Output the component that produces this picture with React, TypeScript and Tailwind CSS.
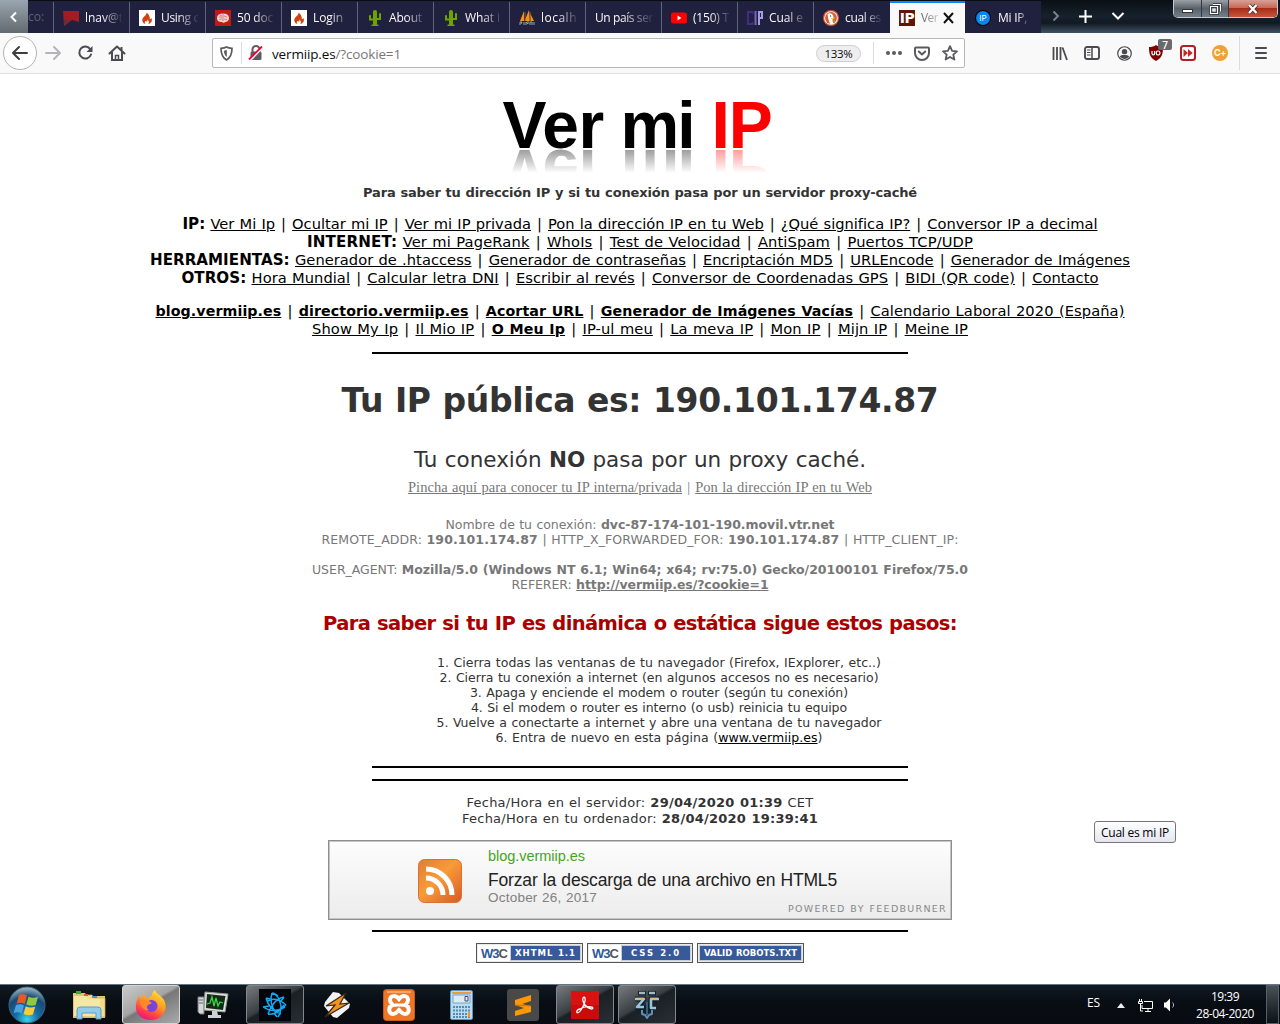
import { useLayoutEffect, useRef, useState } from "react";
import type { ReactNode } from "react";

/** One line of text whose tracking is adjusted so that it spans `w` pixels. */
function Fit({ w, className = "", children }: { w: number; className?: string; children: ReactNode }) {
  const ref = useRef<HTMLSpanElement>(null);
  const [spacing, setSpacing] = useState(0);
  useLayoutEffect(() => {
    const el = ref.current;
    if (!el) return;
    const natural = el.getBoundingClientRect().width;
    setSpacing((w - natural) / Math.max(1, (el.textContent ?? "").length));
  }, [w]);
  return (
    <span ref={ref} className={`inline-block whitespace-nowrap ${className}`} style={{ letterSpacing: `${spacing}px` }}>
      {children}
    </span>
  );
}

function Line({ w, className = "", children }: { w: number; className?: string; children: ReactNode }) {
  return (
    <div className="flex justify-center">
      <Fit w={w} className={className}>{children}</Fit>
    </div>
  );
}

const Bar = () => <span className="mx-[0.058em]">|</span>;
const Head = ({ children }: { children: ReactNode }) => <b className="text-[1.030em]">{children}</b>;

function Links({ items }: { items: string[] }) {
  return (
    <>
      {items.map((t, i) => (
        <span key={t}>
          {i > 0 && <> <Bar /> </>}
          {t.startsWith("*") ? <b className="text-[0.970em] underline">{t.slice(1)}</b> : <span className="underline">{t}</span>}
        </span>
      ))}
    </>
  );
}

/* ---------- tab icons ---------- */
const Flag = () => (
  <svg width="16" height="16" viewBox="0 0 16 16"><path d="M0 1h16v11L9 10 1 16z" fill="#a31c20" /><path d="M1 16V9l7 2z" fill="#6e2d35" /></svg>
);
const Flame = () => (
  <svg width="16" height="16" viewBox="0 0 16 16">
    <rect width="16" height="16" fill="#fff" />
    <path d="M7.500 2.500c.5 2-2 3.500-3.400 5.200-1.800 2.500-.3 5.600 2.300 6.400-1-1.200-.9-2.300.6-3.400.1.900.8 1.200 1.300.6.400-.6-.1-1.200 0-1.800 1.700 1.100 2.300 3.200.9 4.600 3-.7 4.600-3.300 3.200-6-.4 1-1 1.300-1.600 1.100C11.300 6.500 9.500 4 7.500 2.500z" fill="#d2400f" />
  </svg>
);
const Brain = () => (
  <svg width="16" height="16" viewBox="0 0 16 16">
    <rect width="16" height="16" fill="#c01a14" />
    <path d="M2 8c0-3 2-4.500 6-4.500S14 5 14 8s-2.500 4-4 4l-1 1-2-1C4 12 2 11 2 8z" fill="#f6d6cf" />
    <path d="M8 3.500V11M4 7h3M4.500 9.500 7 9M9 6l3 1M9 9l3 .5M5 5l2 1" stroke="#c55" strokeWidth=".7" fill="none" />
  </svg>
);
const Cactus = () => (
  <svg width="16" height="16" viewBox="0 0 16 16" fill="none" stroke="#6fa400" strokeLinecap="round">
    <path d="M8 2v12" strokeWidth="4" /><path d="M3 6v3.500h4M13 4v5H9" strokeWidth="2" /><path d="M5 15.300h6" strokeWidth="1.400" />
  </svg>
);
const Sails = () => (
  <svg width="16" height="16" viewBox="0 0 16 16">
    <path d="M5 1 1 11h4zM10 0 5.500 11H11zM11 3l4 8h-3.500z" fill="#f29222" />
    <path d="M6 2v9M11 2v9" stroke="#8c5a2b" />
    <path d="M1 15v-3h2l-1 2M5 15v-3M7 15v-3l2 2v-3M11 15v-3h2v3M15 15v-3" stroke="#a0a0b0" fill="none" />
  </svg>
);
const YouTube = () => (
  <svg width="16" height="16" viewBox="0 0 16 16"><rect y="2.500" width="16" height="11" rx="2.500" fill="#f00" /><path d="M6.500 5.500v5l4-2.500z" fill="#fff" /></svg>
);
const Cip = () => (
  <svg width="16" height="16" viewBox="0 0 16 16" fill="none">
    <path d="M5.500 4V2H1v12h4.500v-2" stroke="#40308c" strokeWidth="1.800" /><path d="M8.500 1v14" stroke="#7566bd" strokeWidth="2" />
    <path d="M12 15V2h3v6h-3" stroke="#a79cdf" strokeWidth="2" />
  </svg>
);
const Duck = () => (
  <svg width="16" height="16" viewBox="0 0 16 16">
    <circle cx="8" cy="8" r="8" fill="#de5833" /><circle cx="8" cy="8" r="6.800" fill="#fff" /><circle cx="8" cy="8" r="5.900" fill="#de5833" />
    <path d="M4.500 4c2-1.500 6-.5 6 3l-1 3 1 4H7L5 8z" fill="#fff" /><path d="M8 8.200 12 7.500l-1 1.500H8z" fill="#fdd20a" /><path d="m9 11 3-1v3z" fill="#65bc46" /><circle cx="7.500" cy="6" r=".7" fill="#2d4f8e" />
  </svg>
);
const IpSquare = () => (
  <span className="flex h-4 w-4 shrink-0 items-center justify-center bg-[#611605] font-['DejaVu_Sans'] text-[14px] leading-none font-bold tracking-[-0.500px] text-white">IP</span>
);
const IpCircle = () => (
  <span className="flex size-[14px] items-center justify-center rounded-full bg-[#0a84f0] font-['Inter'] text-[8px] leading-none text-white ring-1 ring-black">IP</span>
);

const tabs: { icon?: ReactNode; label: string; w: number }[] = [
  { icon: <Flag />, label: "lnav@t", w: 38 },
  { icon: <Flame />, label: "Using c", w: 38 },
  { icon: <Brain />, label: "50 doc", w: 36 },
  { icon: <Flame />, label: "Login", w: 30 },
  { icon: <Cactus />, label: "About", w: 33 },
  { icon: <Cactus />, label: "What i", w: 35 },
  { icon: <Sails />, label: "localh", w: 36 },
  { label: "Un país ser", w: 58 },
  { icon: <YouTube />, label: "(150) T", w: 36 },
  { icon: <Cip />, label: "Cual e", w: 34 },
  { icon: <Duck />, label: "cual es", w: 36 },
];

function TabBar() {
  return (
    <div className="flex h-[33px] bg-gradient-to-r from-[#7b828b] via-[#0a1016] to-[#56616d]">
      <div className="flex w-7 items-center justify-center bg-gradient-to-b from-[#99a5b0] to-[#646b70]">
        <svg width="10" height="12" viewBox="0 0 10 12"><path d="M7 1.500 2.500 6 7 10.500" stroke="#fff" strokeWidth="2" fill="none" /></svg>
      </div>
      <div className="flex border-t border-[#0a0c12] font-['Open_Sans',sans-serif] text-[12px] text-[#f9f9fa]">
        <div className="flex w-[25px] items-center overflow-hidden bg-[#20213f] text-[#5e5f75]">co:</div>
        {tabs.map((t, i) => (
          <div key={i} className="flex w-[76px] items-center bg-[#20213f] pt-px">
            <div className="h-full w-px bg-[#62637a]" />
            <div className="flex w-[69px] items-center gap-[6px] pl-[9px]">
              {t.icon && <span className="shrink-0">{t.icon}</span>}
              <div className="min-w-0 flex-1 [mask-image:linear-gradient(to_right,#000_45%,transparent_100%)]">
                <Fit w={t.w}>{t.label}</Fit>
              </div>
            </div>
          </div>
        ))}
        <div className="w-px bg-[#20213f]" />
        <div className="flex w-[75px] items-center border-t-2 border-[#0a84ff] bg-[#f9f9fa] pl-[9px] text-[#0c0c0d]">
          <IpSquare />
          <span className="ml-[6px] w-[17px] whitespace-nowrap [mask-image:linear-gradient(to_right,#000a,#0003)]"><Fit w={17}>Ver</Fit></span>
          <svg className="ml-[4px]" width="14" height="12" viewBox="0 0 14 12"><path d="m2 1 9 10M11 1 2 11" stroke="#111" strokeWidth="2" /></svg>
        </div>
        <div className="flex w-[76px] items-center gap-2 bg-[#20213f] pt-px pl-[11px]">
          <IpCircle />
          <div className="w-8 [mask-image:linear-gradient(to_right,#000_60%,transparent_100%)]"><Fit w={29}>Mi IP,</Fit></div>
        </div>
      </div>
      <div className="flex flex-1 bg-[linear-gradient(to_bottom,#0a0f15_0%,#17212c_50%,#111a22_70%,#405264_100%)]">
        <div className="flex h-8 items-center">
          <svg className="ml-[10px]" width="10" height="12" viewBox="0 0 10 12"><path d="m2.500 1.500 4.500 4.500-4.500 4.500" stroke="#7f858c" strokeWidth="1.800" fill="none" /></svg>
          <svg className="ml-[17px]" width="15" height="15" viewBox="0 0 15 15"><path d="M7.500 1v13M1 7.500h13" stroke="#fff" strokeWidth="2" /></svg>
          <svg className="ml-[18px]" width="14" height="12" viewBox="0 0 14 12"><path d="m1.500 3 5.500 5.500L12.500 3" stroke="#fff" strokeWidth="2" fill="none" /></svg>
        </div>
        <div className="mr-[2px] ml-auto flex h-[18px] overflow-hidden rounded-b-[5px] border border-t-0 border-[#c4c9ce]">
          <div className="flex w-[28px] items-end justify-center border-r border-[#32383f] bg-gradient-to-b from-[#9aa0a6] via-[#59626b] to-[#747f89] pb-1"><div className="h-[4px] w-[11px] border border-[#333] bg-white" /></div>
          <div className="flex w-[27px] items-center justify-center border-r border-[#32383f] bg-gradient-to-b from-[#9aa0a6] via-[#59626b] to-[#747f89]">
            <svg width="13" height="12" viewBox="0 0 13 12" fill="none"><path d="M4 1.500h7.500v7M1.500 3.500h7v7h-7z" stroke="#2c3138" strokeWidth="2.600" /><path d="M4 1.500h7.500v7M1.500 3.500h7v7h-7zM4 6h2v2H4z" stroke="#fff" strokeWidth="1.200" /></svg>
          </div>
          <div className="flex w-[48px] items-center justify-center bg-[linear-gradient(to_bottom,#d9a096_0%,#c56a58_45%,#a82d17_50%,#c9553a_100%)]">
            <svg width="14" height="12" viewBox="0 0 14 12"><path d="m3 2 7.500 8M10.500 2 3 10" stroke="#4a2a28" strokeWidth="4" /><path d="m3 2 7.500 8M10.500 2 3 10" stroke="#fff" strokeWidth="2.400" /></svg>
          </div>
        </div>
      </div>
    </div>
  );
}

function Toolbar() {
  return (
    <div className="flex h-[41px] items-center border-b border-[#e0e0e1] bg-[#f9f9fa] text-[#4a4a4f]">
      <div className="ml-[3px] flex size-[34px] items-center justify-center rounded-full border border-[#b4b4b6] bg-white">
        <svg width="18" height="16" viewBox="0 0 18 16" fill="none" stroke="#3e3e42" strokeWidth="2" strokeLinecap="round" strokeLinejoin="round"><path d="M16 8H2M8 2 2 8l6 6" /></svg>
      </div>
      <svg className="ml-2" width="17" height="16" viewBox="0 0 17 16" fill="none" stroke="#b5b5b7" strokeWidth="2" strokeLinecap="round" strokeLinejoin="round"><path d="M1 8h14M9 2l6 6-6 6" /></svg>
      <svg className="ml-[15px]" width="17" height="16" viewBox="0 0 17 16" fill="none"><path d="M13.300 4.200A6 6 0 1 0 14 9.500" stroke="#4a4a4f" strokeWidth="2" strokeLinecap="round" /><path d="M15.500 1v6h-6z" fill="#4a4a4f" /></svg>
      <svg className="ml-[14px]" width="18" height="16" viewBox="0 0 18 16" fill="none" stroke="#4a4a4f" strokeWidth="2"><path d="m1.500 8.500 7.500-7 7.500 7" strokeLinecap="round" strokeLinejoin="round" /><path d="M4 7v8h10V7" /><path d="M7.500 15v-4.500h3V15" strokeWidth="1.500" /><path d="M13.500 2v3" /></svg>

      <div className="ml-[86px] flex h-[30px] w-[753px] items-center rounded-[2px] border border-[#b8b8ba] bg-white">
        <svg className="ml-[7px]" width="13" height="15" viewBox="0 0 13 15"><path d="M6.500 1C8 2 10 2.300 12 2.300 12 8 11 11.500 6.500 14 2 11.500 1 8 1 2.300 3 2.300 5 2 6.500 1z" fill="none" stroke="#5c5c60" strokeWidth="1.700" /><path d="M6.800 4v7C4.800 9.500 4 7.500 4 4.800z" fill="#5c5c60" /></svg>
        <div className="ml-2 h-[22px] w-px bg-[#dcdcde]" />
        <svg className="ml-[6px]" width="16" height="16" viewBox="0 0 16 16"><path d="M4.500 7V4.500a3.500 3.500 0 0 1 7 0V7" fill="none" stroke="#5c5c60" strokeWidth="2" /><rect x="2.500" y="6.500" width="11" height="8.500" rx="1.500" fill="#5c5c60" /><path d="M2.500 15 14 3" stroke="#fff" strokeWidth="2" /><path d="M1 14.500 14 1.500" stroke="#ff0039" strokeWidth="1.800" /></svg>
        <Fit w={129} className="mt-[2px] ml-2 font-['Open_Sans',sans-serif] text-[13.500px] leading-5 text-[#0c0c0d]">vermiip.es<span className="text-[#77777a]">/?cookie=1</span></Fit>
        <div className="ml-auto flex h-[17px] w-[45px] items-center justify-center rounded-full border border-[#cfcfd1] bg-[#eeeeef] font-['Open_Sans',sans-serif] text-[11.500px] text-[#0c0c0d]"><Fit w={28} className="mt-px">133%</Fit></div>
        <div className="ml-3 h-[22px] w-px bg-[#dcdcde]" />
        <svg className="ml-3" width="16" height="4" viewBox="0 0 16 4" fill="#5a5a5e"><circle cx="2" cy="2" r="2" /><circle cx="8" cy="2" r="2" /><circle cx="14" cy="2" r="2" /></svg>
        <svg className="ml-3" width="16" height="15" viewBox="0 0 16 15" fill="none" stroke="#5a5a5e" strokeWidth="2" strokeLinecap="round" strokeLinejoin="round"><path d="M2 1.500h12a1 1 0 0 1 1 1V7A7 7 0 0 1 1 7V2.500a1 1 0 0 1 1-1z" /><path d="M4.800 5.500 8 8.500l3.200-3" /></svg>
        <svg className="mr-[6px] ml-3" width="16" height="16" viewBox="0 0 16 16" fill="none" stroke="#5a5a5e" strokeWidth="1.800" strokeLinejoin="round"><path d="m8 1.200 2.100 4.600 4.900.5-3.700 3.300 1.100 5L8 12l-4.400 2.600 1.100-5L1 6.300l4.900-.5z" /></svg>
      </div>

      <div className="ml-[87px] flex items-center">
        <svg width="16" height="15" viewBox="0 0 16 15" stroke="#4a4a4f" strokeWidth="1.800" fill="none"><path d="M1.500 1v13M5 1v13M8.500 1v13M10.500 1.500 15 14" /></svg>
        <svg className="ml-[16px]" width="16" height="14" viewBox="0 0 16 14" fill="none" stroke="#4a4a4f"><rect x="1" y="1" width="14" height="12" rx="2" strokeWidth="1.900" /><path d="M8 1v12" strokeWidth="1.500" /><path d="M3 4h3.500M3 6.500h3.500M3 9h3.500" strokeWidth="1.100" /></svg>
        <svg className="ml-[17px]" width="15" height="15" viewBox="0 0 16 16"><circle cx="8" cy="8" r="7.200" fill="none" stroke="#4a4a4f" strokeWidth="1.300" /><circle cx="8" cy="6" r="2.900" fill="#4a4a4f" /><path d="M3 11.200C4 9.300 6 9.500 8 9.500s4 0 5 1.700A6 6 0 0 1 3 11.200z" fill="#4a4a4f" /></svg>
        <div className="relative ml-[16px]">
          <svg width="16" height="16" viewBox="0 0 16 16"><path d="M8 0c2 1.500 4 2 7 2 0 7-1 11-7 14C2 13 1 9 1 2c3 0 5-.5 7-2z" fill="#800000" /><path d="M4 6v2.500a1.300 1.300 0 0 0 2.600 0V6" stroke="#fff" strokeWidth="1.200" fill="none" /><rect x="8.300" y="6" width="3.600" height="3.900" rx="1.500" stroke="#fff" strokeWidth="1.200" fill="none" /></svg>
          <span className="absolute -top-[6px] left-[10px] flex h-[11px] w-[14px] items-center justify-center rounded-[2px] bg-[#6a6a6c] font-['Open_Sans'] text-[10px] leading-none font-semibold text-white">7</span>
        </div>
        <svg className="ml-4" width="16" height="16" viewBox="0 0 16 16"><rect x="1" y="1" width="14" height="14" rx="2.500" fill="#fff" stroke="#b61b22" strokeWidth="2" /><path d="M3.500 4v8l4.500-4zM8 4v8l4.700-4z" fill="#c8262d" /></svg>
        <div className="ml-4 flex size-4 items-center justify-center rounded-full bg-[#f0a136] font-['Inter'] text-[9px] font-bold tracking-[-0.300px] text-white">C+</div>
        <div className="ml-[11px] h-[34px] w-px bg-[#dcdcde]" />
        <svg className="ml-[15px]" width="12" height="12" viewBox="0 0 12 12" stroke="#4a4a4f" strokeWidth="2" strokeLinecap="round"><path d="M1 1h10M1 6h10M1 11h10" /></svg>
      </div>
    </div>
  );
}

function Rule({ className = "" }: { className?: string }) {
  return <div className={`mx-auto h-[2px] w-[536px] bg-black ${className}`} />;
}

function Badge({ left, text, tw, width = "w-[107px]" }: { left?: boolean; text: string; tw: number; width?: string }) {
  return (
    <div className={`flex h-5 border border-[#555] bg-[#e8ebe6] p-px ${width}`}>
      {left && (
        <div className="flex w-[32px] items-center justify-center bg-white font-['Liberation_Sans'] text-[13px] leading-none font-bold tracking-[-1px] text-[#2d5a9c]">
          W3<span className="text-[#555]">C</span>
        </div>
      )}
      <div className="flex flex-1 items-center justify-center border border-[#c8cdd8] bg-[#38599a] font-['DejaVu_Sans'] text-[8.500px] leading-none font-bold text-white">
        <Fit w={tw}>{text}</Fit>
      </div>
    </div>
  );
}

function Page() {
  return (
    <main className="h-[910px] bg-white text-center font-['DejaVu_Sans',sans-serif] text-[#333] [word-spacing:0.034em]">
      <div className="flex h-[102px] justify-center pt-[27px]">
        <div className="flex h-[48px] w-[275px] font-['Liberation_Sans',sans-serif] text-[66px] leading-[48px] font-bold text-black [-webkit-box-reflect:below_0px_linear-gradient(to_top,#0006,transparent_50%)]">
          <Fit w={101}>Ver</Fit>
          <Fit w={73} className="ml-[17px]">mi</Fit>
          <Fit w={60} className="ml-[18px] text-[#f00]">IP</Fit>
        </div>
      </div>
      <div className="mt-[9px] text-[13px] leading-4 font-bold"><Line w={554}>Para saber tu dirección IP y si tu conexión pasa por un servidor proxy-caché</Line></div>

      <div className="mt-[14px] text-[14.670px] leading-[18px] text-black">
        <Line w={915}><Head>IP:</Head> <Links items={["Ver Mi Ip", "Ocultar mi IP", "Ver mi IP privada", "Pon la dirección IP en tu Web", "¿Qué significa IP?", "Conversor IP a decimal"]} /></Line>
        <Line w={666}><Head>INTERNET:</Head> <Links items={["Ver mi PageRank", "WhoIs", "Test de Velocidad", "AntiSpam", "Puertos TCP/UDP"]} /></Line>
        <Line w={980}><Head>HERRAMIENTAS:</Head> <Links items={["Generador de .htaccess", "Generador de contraseñas", "Encriptación MD5", "URLEncode", "Generador de Imágenes"]} /></Line>
        <Line w={917}><Head>OTROS:</Head> <Links items={["Hora Mundial", "Calcular letra DNI", "Escribir al revés", "Conversor de Coordenadas GPS", "BIDI (QR code)", "Contacto"]} /></Line>
      </div>
      <div className="mt-[15px] text-[14.670px] leading-[18px] text-black">
        <Line w={969}><Links items={["*blog.vermiip.es", "*directorio.vermiip.es", "*Acortar URL", "*Generador de Imágenes Vacías", "Calendario Laboral 2020 (España)"]} /></Line>
        <Line w={656}><Links items={["Show My Ip", "Il Mio IP", "*O Meu Ip", "IP-ul meu", "La meva IP", "Mon IP", "Mijn IP", "Meine IP"]} /></Line>
      </div>
      <Rule className="mt-[14px]" />

      <h1 className="mt-[27px] text-[33px] leading-10 font-bold"><Line w={597}>Tu IP pública es: 190.101.174.87</Line></h1>
      <div className="mt-[26px] text-[21.500px] leading-[26px]"><Line w={452}>Tu conexión <b>NO</b> pasa por un proxy caché.</Line></div>
      <div className="mt-[6px] font-['Liberation_Serif',serif] text-[14.500px] leading-4 text-[#777]"><Line w={464}><Links items={["Pincha aquí para conocer tu IP interna/privada", "Pon la dirección IP en tu Web"]} /></Line></div>

      <div className="mt-[22px] text-[12.500px] leading-[15px] text-[#777]">
        <Line w={389}>Nombre de tu conexión: <b>dvc-87-174-101-190.movil.vtr.net</b></Line>
        <Line w={637}>REMOTE_ADDR: <b>190.101.174.87</b> | HTTP_X_FORWARDED_FOR: <b>190.101.174.87</b> | HTTP_CLIENT_IP:</Line>
        <Line w={656} className="mt-[15px]">USER_AGENT: <b>Mozilla/5.0 (Windows NT 6.1; Win64; x64; rv:75.0) Gecko/20100101 Firefox/75.0</b></Line>
        <Line w={257}>REFERER: <b className="underline">http://vermiip.es/?cookie=1</b></Line>
      </div>

      <h2 className="mt-[20px] text-[19.500px] leading-6 font-bold text-[#a00]"><Line w={634}>Para saber si tu IP es dinámica o estática sigue estos pasos:</Line></h2>

      <div className="mt-[19px] pl-[38px] text-[12.500px] leading-[15px]">
        <Line w={444}>1. Cierra todas las ventanas de tu navegador (Firefox, IExplorer, etc..)</Line>
        <Line w={439}>2. Cierra tu conexión a internet (en algunos accesos no es necesario)</Line>
        <Line w={378}>3. Apaga y enciende el modem o router (según tu conexión)</Line>
        <Line w={376}>4. Si el modem o router es interno (o usb) reinicia tu equipo</Line>
        <Line w={445}>5. Vuelve a conectarte a internet y abre una ventana de tu navegador</Line>
        <Line w={327}>6. Entra de nuevo en esta página (<span className="text-black underline">www.vermiip.es</span>)</Line>
      </div>
      <Rule className="mt-[21px]" />
      <Rule className="mt-[11px]" />

      <div className="mt-[14px] text-[13px] leading-4">
        <Line w={347}>Fecha/Hora en el servidor: <b>29/04/2020 01:39</b> CET</Line>
        <Line w={356}>Fecha/Hora en tu ordenador: <b>28/04/2020 19:39:41</b></Line>
      </div>

      <div className="mx-auto mt-[13px] flex h-20 w-[624px] border border-[#8e8e8e] bg-gradient-to-b from-[#fdfdfd] to-[#ececec] p-px text-left font-['Liberation_Sans',sans-serif] ring-1 ring-[#c4c4c4] ring-inset">
        <svg className="mt-[17px] ml-[88px] shrink-0" width="44" height="44" viewBox="0 0 44 44">
          <defs><linearGradient id="rss" x1="0" y1="0" x2="1" y2="1"><stop offset="0" stopColor="#e27c36" /><stop offset=".45" stopColor="#f89b38" /><stop offset="1" stopColor="#d75a28" /></linearGradient></defs>
          <rect x=".5" y=".5" width="43" height="43" rx="6" fill="url(#rss)" stroke="#dc7134" />
          <circle cx="12" cy="32" r="4" fill="#fff" /><path d="M8 19a17 17 0 0 1 17 17M8 10a26 26 0 0 1 26 26" stroke="#fff" strokeWidth="5" fill="none" />
        </svg>
        <div className="ml-[26px] flex flex-col items-start pt-[5px]">
          <Fit w={97} className="text-[14.500px] leading-[19px] text-[#44a524]">blog.vermiip.es</Fit>
          <Fit w={349} className="mt-[4px] text-[17.500px] leading-5 text-[#222]">Forzar la descarga de una archivo en HTML5</Fit>
          <Fit w={109} className="text-[13.500px] leading-4 text-[#808080]">October 26, 2017</Fit>
        </div>
        <div className="mr-[3px] mb-[4px] ml-auto flex items-end font-['DejaVu_Sans'] text-[9.500px] leading-[11px] text-[#888]">
          <Fit w={159} className="-ml-[60px]">POWERED BY FEEDBURNER</Fit>
        </div>
      </div>
      <Rule className="mt-[10px]" />
      <div className="mt-[11px] flex justify-center gap-[4px]">
        <Badge left text="XHTML 1.1" tw={61} />
        <Badge left text="CSS 2.0" tw={50} width="w-[106px]" />
        <Badge text="VALID ROBOTS.TXT" tw={93} />
      </div>
    </main>
  );
}

/* ---------- taskbar ---------- */
function TaskButton({ active, children, className = "" }: { active?: "light" | "dark"; children: ReactNode; className?: string }) {
  const look =
    active === "light"
      ? "border border-[#d5d5d5] bg-[linear-gradient(150deg,#c9c9c9_0%,#a5a5a5_45%,#777_50%,#aaa_100%)]"
      : active === "dark"
        ? "border border-[#82878b] bg-[linear-gradient(150deg,#777b7e_0%,#3a3f44_45%,#1b2025_50%,#282e33_100%)]"
        : "";
  return <div className={`flex h-[39px] w-[58px] items-center justify-center rounded-[3px] ${look} ${className}`}>{children}</div>;
}

function Taskbar() {
  return (
    <div className="flex h-10 items-center border-t border-[#667783] bg-gradient-to-b from-[#111a22] via-[#080c13] to-[#080b12] font-['Open_Sans',sans-serif] text-white">
      <svg className="ml-[8px]" width="38" height="38" viewBox="0 0 38 38">
        <defs><radialGradient id="orb" cx=".5" cy=".9" r=".9"><stop offset="0" stopColor="#35d6f0" /><stop offset=".35" stopColor="#176ca5" /><stop offset=".7" stopColor="#174a73" /><stop offset="1" stopColor="#a6bccb" /></radialGradient></defs>
        <circle cx="19" cy="19" r="18" fill="url(#orb)" stroke="#3b677f" />
        <path d="M11 9c3-1.500 5.500-1 8 .5l-2.300 8.500c-2.500-1.500-5-1.500-8-.5z" fill="#e65a28" />
        <path d="M20.500 10.500c3 1.500 6 1.500 9.500.5l-2.300 8c-3 1-6 .8-9.400-.6z" fill="#93c83e" />
        <path d="M8 19c3-1 5.500-1 8 .5l-2.300 8c-2.500-1.500-5-1.500-8-.5z" fill="#4aa2df" />
        <path d="M17.700 20.300c3 1.500 6 1.500 9.500.5l-2.300 7.700c-3 1-6 .8-9.400-.6z" fill="#fbcb35" />
      </svg>
      <div className="ml-[13px] flex w-[60px] items-center justify-center">
        <svg width="34" height="30" viewBox="0 0 34 30">
          <path d="M1 28V3h12l2 3h18v22z" fill="#e3c56d" /><path d="M11 27V5h9l2 3h11v19z" fill="#f5dc8c" stroke="#c9ae5a" strokeWidth=".7" /><path d="M2 26V6h12l2 3h12v17z" fill="#f7e7a7" />
          <path d="M4 1h5v3H4z" fill="#3aab3b" /><path d="M12 4h4v2h-4z" fill="#d95a35" /><path d="M20 6h5v2h-5z" fill="#3f95d8" />
          <path d="M5 29V20a3 3 0 0 1 3-3h18a3 3 0 0 1 3 3v9h-5v-6H10v6z" fill="#92cdec" stroke="#5a9ec6" />
        </svg>
      </div>
      <TaskButton active="light" className="ml-[3px]">
        <svg width="32" height="32" viewBox="0 0 32 32">
          <defs><linearGradient id="fx" x1=".8" y1="0" x2=".3" y2="1"><stop offset="0" stopColor="#ffea3b" /><stop offset=".45" stopColor="#ff9820" /><stop offset=".8" stopColor="#ff3650" /><stop offset="1" stopColor="#e31587" /></linearGradient></defs>
          <path d="M20 1c1 4 6 5 9 10 5 10-2 20-13 20C6 31 0 24 1 16c0-4 2-7 3-9l2 3 3-6 2 5c3 0 5-1 6-3 0-2 1-4 3-5z" fill="url(#fx)" />
          <circle cx="16.500" cy="17" r="6" fill="#7b43d8" /><path d="M5 13c3-2 6-1 9-1l3 2-4 2c-2 2-1 4 1 5-5 1-8-3-9-8z" fill="#ff8a26" />
        </svg>
      </TaskButton>
      <TaskButton className="ml-[4px]">
        <svg width="32" height="30" viewBox="0 0 32 30">
          <path d="M1 7h6v17H3l-2-2z" fill="#d5d8d8" stroke="#777" /><path d="M2 10h4M2 13h4" stroke="#666" />
          <path d="M8 2 31 4 28 22 7 20z" fill="#dfe2dc" stroke="#999" /><path d="M10 4 28.500 6 26 20 9 18z" fill="#122b18" />
          <path d="m10 14 3-1 2-6 2 9 2-8 2 8 2-4 3 1" stroke="#39d742" strokeWidth="1.300" fill="none" />
          <path d="M15 21h5l1 4h3v3H11v-3h4z" fill="#ced1cf" />
        </svg>
      </TaskButton>
      <TaskButton active="dark" className="ml-[4px]">
        <svg width="32" height="32" viewBox="0 0 32 32" fill="none" stroke="#14a9f4" strokeWidth="1.500">
          <rect width="32" height="32" fill="#02050a" stroke="none" />
          <path d="M13 4c5 1 8 7 9 13 0 4-1 8-3 11M9 12c5-3 11-2 18 4M7 9c2 8 7 13 15 16M25 8c-7 1-13 8-16 17M13 4c-2 6-1 13 4 20M4 18c6 4 14 5 22 0M9 25c6 1 12-3 16-9M14 4l5 3M4 18l6-1M18 28l-3-4M27 16l-4 3M7 9l4 1M25 8l-3 4" />
        </svg>
      </TaskButton>
      <TaskButton className="ml-[4px]">
        <svg width="28" height="28" viewBox="0 0 28 28"><path d="M10 1 16 2 27 13 26 17 14 27 10 26 1 15 2 11z" fill="#f2f2f2" /><path d="M23 2 3 15l9-1L2 26l24-14-9 1z" fill="#ef921f" stroke="#342416" strokeWidth="1.200" /></svg>
      </TaskButton>
      <TaskButton className="ml-[4px]">
        <svg width="32" height="32" viewBox="0 0 32 32"><rect x=".5" y=".5" width="31" height="31" rx="3" fill="#ee7627" stroke="#c95c19" /><path d="M4 3h24" stroke="#f8a66b" strokeWidth="2" /><path d="M7 11c0-5 6-5 9-1 3-4 9-4 9 1 0 3-2 4-3 5 5 1 5 9 0 9-3 0-4-2-6-4-2 2-3 4-6 4-5 0-5-8 0-9-1-1-3-2-3-5z" fill="none" stroke="#fff" strokeWidth="4" /><path d="M12 16h8" stroke="#fff" strokeWidth="3" /></svg>
      </TaskButton>
      <TaskButton className="ml-[4px]">
        <svg width="23" height="30" viewBox="0 0 23 30"><rect x=".5" y=".5" width="22" height="29" rx="1.500" fill="#b9dcf1" stroke="#5d94ba" /><path d="M2 2h19v2H2z" fill="#ec9b3c" /><path d="M3 5h17v8H3z" fill="#dcebf5" stroke="#7da4bd" /><path d="M15 6.500h3v4.500h-3z" stroke="#35536a" fill="none" /><path d="M3 17h17M3 20.500h17M3 24h17M3 27h17" stroke="#5788ae" strokeWidth="2" strokeDasharray="2 1" /><path d="M18 22h2v5h-2z" fill="#f0952a" /></svg>
      </TaskButton>
      <TaskButton className="ml-[4px]">
        <svg width="32" height="32" viewBox="0 0 32 32"><rect width="32" height="32" rx="3" fill="#494949" /><path d="m8 11 16-5v6l-9 3 9 2v6L8 27v-5l9-3-9-3z" fill="#ff9800" /><path d="m8 16 16 1" stroke="#ca7206" /></svg>
      </TaskButton>
      <TaskButton active="dark" className="ml-[4px]">
        <svg width="28" height="28" viewBox="0 0 28 28"><rect width="28" height="28" fill="#c80b0b" /><path d="M0 0h28v14H0z" fill="#d91111" /><path d="M6 20c-1 3 2 2 4-1 3-5 5-9 4-12-1-2-3 0-2 3 1 4 5 7 8 8 3 0 2-2 0-2-4-1-8 0-11 2-1 0-3 1-3 2z" fill="none" stroke="#fff" strokeWidth="1.300" /></svg>
      </TaskButton>
      <TaskButton active="dark" className="ml-[4px]">
        <svg width="28" height="28" viewBox="0 0 28 28" fill="none" strokeLinejoin="round">
          <path d="M5 2h8M15 2h8M2 8h9l-6 9h7v5M26 8h-8v13" stroke="#10202c" strokeWidth="5" />
          <path d="M6 2h6M16 2h6" stroke="#a9b9bd" strokeWidth="2.500" />
          <path d="M2 8h9l-7 8h7M26 8h-8v9h5" stroke="#9cc4d8" strokeWidth="2.600" />
          <path d="M3 7.500h8M17 7.500h8" stroke="#d9b87c" strokeWidth="1.600" />
          <path d="M9 19v4l3 1 2 3 2-3 3-1v-4" stroke="#5b8fb4" strokeWidth="2" /><path d="M14 11v14" stroke="#35617f" strokeWidth="2" />
        </svg>
      </TaskButton>

      <div className="ml-auto flex h-full items-center">
        <span className="mb-[4px] text-[12px]"><Fit w={13}>ES</Fit></span>
        <svg className="mt-[1px] ml-[17px]" width="8" height="5" viewBox="0 0 8 5"><path d="M4 0 8 5H0z" fill="#eee" /></svg>
        <svg className="mt-[1px] ml-[13px]" width="15" height="15" viewBox="0 0 15 15" fill="none" stroke="#fff"><path d="M6 3.500h8.500v7H4V7M7 13.500h6M10 10.500v3M.5 3.500h4v2h-4zM1.500 1v2M3.500 1v2M2.500 5.500V13H5" /></svg>
        <svg className="ml-[10px]" width="13" height="14" viewBox="0 0 13 14"><path d="M1 4.500h2L7 .5v13l-4-4H1z" fill="#fff" /><path d="M9.500 4.500c1.500 1.500 1.500 3.500 0 5" stroke="#bbb" fill="none" /></svg>
        <div className="ml-[19px] flex w-[60px] flex-col items-center text-[12px] leading-[17px]">
          <Fit w={28}>19:39</Fit>
          <Fit w={58}>28-04-2020</Fit>
        </div>
        <div className="ml-[11px] h-full w-[13px] border border-[#566069] bg-gradient-to-b from-[#4b5257] to-[#0d1217]" />
        <div className="w-px" />
      </div>
    </div>
  );
}

export default function App() {
  return (
    <div className="relative flex h-[1024px] w-[1280px] flex-col overflow-hidden">
      <TabBar />
      <Toolbar />
      <Page />
      <Taskbar />
      <div className="absolute top-[821px] left-[1094px] flex h-[22px] w-[82px] items-center justify-center rounded-[3px] border border-[#767676] bg-gradient-to-b from-white to-[#e4e5f0] font-['Open_Sans',sans-serif] text-[12px] text-black">
        <Fit w={68} className="mt-[2px]">Cual es mi IP</Fit>
      </div>
    </div>
  );
}
